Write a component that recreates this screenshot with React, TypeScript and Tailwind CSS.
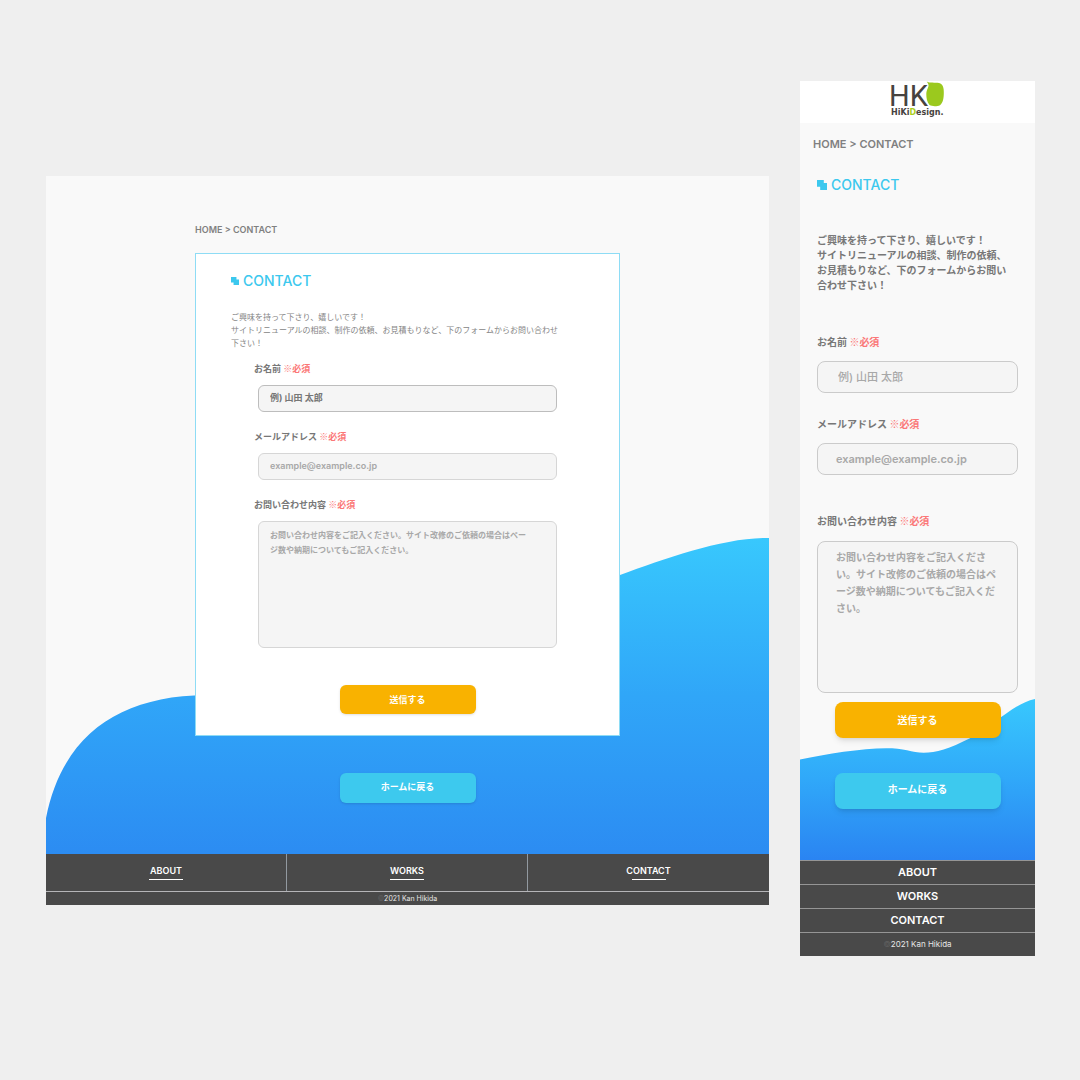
import React, { useId } from "react";

const navLinks = ["ABOUT", "WORKS", "CONTACT"];

const messageHint =
  "お問い合わせ内容をご記入ください。サイト改修のご依頼の場合はページ数や納期についてもご記入ください。";

function SquaresIcon({ className }: { className: string }) {
  return (
    <svg viewBox="0 0 10 10" className={className} aria-hidden="true">
      <path d="M0 0H6.8V3H10V10H3.2V6.8H0Z" fill="#3cc8ee" />
    </svg>
  );
}

function Logo() {
  return (
    <span className="flex flex-col text-[#474340]">
      <span className="flex h-[27px] items-start">
        <span className="mt-0.5 -ml-0.5 w-[37px] font-['Roboto',sans-serif] text-[29px] leading-[26px] font-normal">
          HK
        </span>
        <svg viewBox="0 0 18 26" className="h-[26px] w-[18px]" aria-hidden="true">
          <path
            d="M.7.500C3.500 2.300 9 1.200 13 2C17 3 18 7 17.800 12C17.800 17 17 22 14 24.200C11 25.500 6 25.500 3.500 24C1 21 .300 17 .300 13C.500 8.500 2.800 6.500 2.500 4C2.300 2.500 1.300 1.500 .7.500Z"
            fill="#9bc91e"
          />
        </svg>
      </span>
      <span className="font-['DejaVu_Sans',sans-serif] text-[8px] leading-[10px] font-bold">
        HiKi<span className="text-[#a9cf1c]">D</span>esign.
      </span>
    </span>
  );
}

function FieldLabel({ htmlFor, text, className }: { htmlFor: string; text: string; className: string }) {
  return (
    <label htmlFor={htmlFor} className={`block font-bold text-[#777] ${className}`}>
      {text}{" "}
      <span className="text-[#fb7777]">
        <span className="font-['Noto_Sans_CJK_JP',sans-serif] font-normal">※</span>必須
      </span>
    </label>
  );
}

function DesktopPage() {
  const id = useId();
  const label = "text-[9px] leading-4";
  const field =
    "ml-1 block w-[299px] rounded-md border bg-[#f5f5f5] px-[11px] pb-0.5 text-[9px]";
  return (
    <section className="relative isolate mt-[95px] flex flex-col bg-[#f9f9f9]">
      <div className="absolute inset-x-0 bottom-[51px] -z-10">
        <svg viewBox="0 0 723 316" preserveAspectRatio="none" className="h-[316px] w-full" aria-hidden="true">
          <defs>
            <linearGradient id="wide-wave" x1="0" y1="0" x2="0" y2="1">
              <stop offset="0" stopColor="#38c8fd" />
              <stop offset="0.5" stopColor="#30a6f8" />
              <stop offset="1" stopColor="#2c8cf2" />
            </linearGradient>
          </defs>
          <path
            d="M0 280C17 195 75 158 160 157C330 156 430 92 574 37C620 20 680 -1 723 0V316H0Z"
            fill="url(#wide-wave)"
          />
        </svg>
      </div>

      <div className="mx-auto w-[425px] pt-[46px]">
        <nav aria-label="breadcrumb" className="text-[9px] leading-4 font-semibold text-[#808080]">
          <a href="#home">HOME</a> &gt; <a href="#contact">CONTACT</a>
        </nav>
        <div className="mt-[15px] border border-[#8edcf5] bg-white px-[35px] pt-[17px] pb-[21px]">
          <h1 className="flex items-center gap-1 text-sm leading-5 font-medium text-[#3cc8ee]">
            <SquaresIcon className="size-2" />
            CONTACT
          </h1>
          <p className="mt-5 max-w-[332px] text-[8px] leading-[13px] text-[#858585]">
            ご興味を持って下さり、嬉しいです！
            <br />
            サイトリニューアルの相談、制作の依頼、お見積もりなど、下のフォームからお問い合わせ下さい！
          </p>
          <form className="mx-auto mt-[11px] w-[307px]" onSubmit={(e) => e.preventDefault()}>
            <FieldLabel htmlFor={`${id}-name`} text="お名前" className={label} />
            <input
              id={`${id}-name`}
              type="text"
              placeholder="例) 山田 太郎"
              className={`${field} mt-2 h-[27px] border-[#bdbdbd] font-bold placeholder:text-[#777]`}
            />
            <FieldLabel htmlFor={`${id}-mail`} text="メールアドレス" className={`mt-[17px] ${label}`} />
            <input
              id={`${id}-mail`}
              type="email"
              placeholder="example@example.co.jp"
              className={`${field} mt-2 h-[27px] border-[#d6d6d6] font-semibold placeholder:text-[#a8a8a8]`}
            />
            <FieldLabel htmlFor={`${id}-body`} text="お問い合わせ内容" className={`mt-[17px] ${label}`} />
            <textarea
              id={`${id}-body`}
              placeholder={messageHint}
              className="mt-2 ml-1 block h-[127px] w-[299px] resize-none rounded-md border border-[#d6d6d6] bg-[#f5f5f5] py-1.5 pr-6 pl-[11px] text-[8px] leading-[15px] font-bold placeholder:text-[#a8a8a8]"
            />
            <button
              type="submit"
              className="mx-auto mt-[37px] block h-[29px] w-[136px] rounded-md bg-[#f9b200] text-[9px] font-bold text-white shadow"
            >
              送信する
            </button>
          </form>
        </div>
      </div>
      <a
        href="#home"
        className="mx-auto mt-[37px] flex h-[30px] w-[136px] items-center justify-center rounded-md bg-[#3dc9ee] pb-0.5 text-[9px] font-bold text-white shadow"
      >
        ホームに戻る
      </a>

      <footer className="mt-[51px] bg-[#494949] text-white">
        <nav className="grid h-[38px] grid-cols-3 divide-x divide-[#9299a0] border-b border-[#b5b5b8]">
          {navLinks.map((name) => (
            <a
              key={name}
              href={`#${name.toLowerCase()}`}
              className="flex flex-col items-center pt-[11px] text-[9px] leading-3 font-semibold"
            >
              {name}
              <span className="mt-0.5 h-px w-[34px] bg-white" />
            </a>
          ))}
        </nav>
        <p className="text-center text-[7px] leading-[13px] text-[#e6e6e6]">
          <span className="text-[#606060]">©</span>2021 Kan Hikida
        </p>
      </footer>
    </section>
  );
}

function MobilePage() {
  const id = useId();
  const label = "text-[10px] leading-4";
  const field =
    "block w-full rounded-lg border border-[#cbcbcb] bg-[#f5f5f5] placeholder:text-[#a8a8a8]";
  return (
    <section className="relative isolate flex flex-col bg-[#f9f9f9]">
      <div className="absolute inset-x-0 bottom-24 -z-10">
        <svg viewBox="0 0 235 161" preserveAspectRatio="none" className="h-[162px] w-full" aria-hidden="true">
          <defs>
            <linearGradient id="narrow-wave" x1="0" y1="0" x2="0" y2="1">
              <stop offset="0" stopColor="#38c8fd" />
              <stop offset="0.5" stopColor="#30a8f9" />
              <stop offset="1" stopColor="#2a84f2" />
            </linearGradient>
          </defs>
          <path
            d="M0 61C35 54 85 46 107 52C125 57 140 55 170 40C195 27 212 6 235 1V161H0Z"
            fill="url(#narrow-wave)"
          />
        </svg>
      </div>

      <header className="flex h-[42px] justify-center bg-white">
        <a href="#home" aria-label="HiKiDesign">
          <Logo />
        </a>
      </header>
      <nav aria-label="breadcrumb" className="mt-[13px] pl-[13px] text-[11px] leading-4 font-semibold text-[#808080]">
        <a href="#home">HOME</a> &gt; <a href="#contact">CONTACT</a>
      </nav>

      <div className="px-[17px]">
        <h2 className="mt-[23px] flex items-center gap-1 text-sm leading-5 font-medium text-[#3cc8ee]">
          <SquaresIcon className="size-2.5" />
          CONTACT
        </h2>
        <p className="mt-[38px] pr-[5px] text-[10px] leading-[15px] font-bold text-[#777]">
          ご興味を持って下さり、嬉しいです！
          <br />
          サイトリニューアルの相談、制作の依頼、お見積もりなど、下のフォームからお問い合わせ下さい！
        </p>
        <form className="mt-[41px]" onSubmit={(e) => e.preventDefault()}>
          <FieldLabel htmlFor={`${id}-name`} text="お名前" className={label} />
          <input
            id={`${id}-name`}
            type="text"
            placeholder="例) 山田 太郎"
            className={`${field} mt-[11px] h-8 px-5 text-[11px] font-medium`}
          />
          <FieldLabel htmlFor={`${id}-mail`} text="メールアドレス" className={`mt-[23px] ${label}`} />
          <input
            id={`${id}-mail`}
            type="email"
            placeholder="example@example.co.jp"
            className={`${field} mt-[11px] h-8 px-[18px] text-[11px] font-semibold`}
          />
          <FieldLabel htmlFor={`${id}-body`} text="お問い合わせ内容" className={`mt-[38px] ${label}`} />
          <textarea
            id={`${id}-body`}
            placeholder={messageHint}
            className={`${field} mt-3 h-[152px] resize-none py-[7px] pr-4 pl-[18px] text-[10px] leading-[17px] font-bold`}
          />
          <button
            type="submit"
            className="mx-auto mt-[9px] block h-9 w-[166px] rounded-lg bg-[#f9b200] text-[10px] font-bold text-white shadow-md"
          >
            送信する
          </button>
        </form>
        <a
          href="#home"
          className="mx-auto mt-[35px] flex h-9 w-[166px] items-center justify-center rounded-lg bg-[#3dc9ee] pb-1 text-[10px] font-bold text-white shadow-md"
        >
          ホームに戻る
        </a>
      </div>

      <footer className="mt-[51px] bg-[#494949] text-center text-white">
        <nav>
          {navLinks.map((name) => (
            <a
              key={name}
              href={`#${name.toLowerCase()}`}
              className="block border-t border-[#959595] text-[11px] leading-[23px] font-semibold"
            >
              {name}
            </a>
          ))}
        </nav>
        <p className="border-t border-[#959595] text-[8px] leading-[23px] text-[#e6e6e6]">
          <span className="text-[#606060]">©</span>2021 Kan Hikida
        </p>
      </footer>
    </section>
  );
}

export default function App() {
  return (
    <main
      lang="ja"
      className="grid min-h-screen grid-cols-[723fr_235fr] items-start gap-[31px] bg-[#efefef] pt-[81px] pr-[45px] pb-10 pl-[46px] font-['Inter','Noto_Sans_CJK_JP',sans-serif]"
    >
      <DesktopPage />
      <MobilePage />
    </main>
  );
}
